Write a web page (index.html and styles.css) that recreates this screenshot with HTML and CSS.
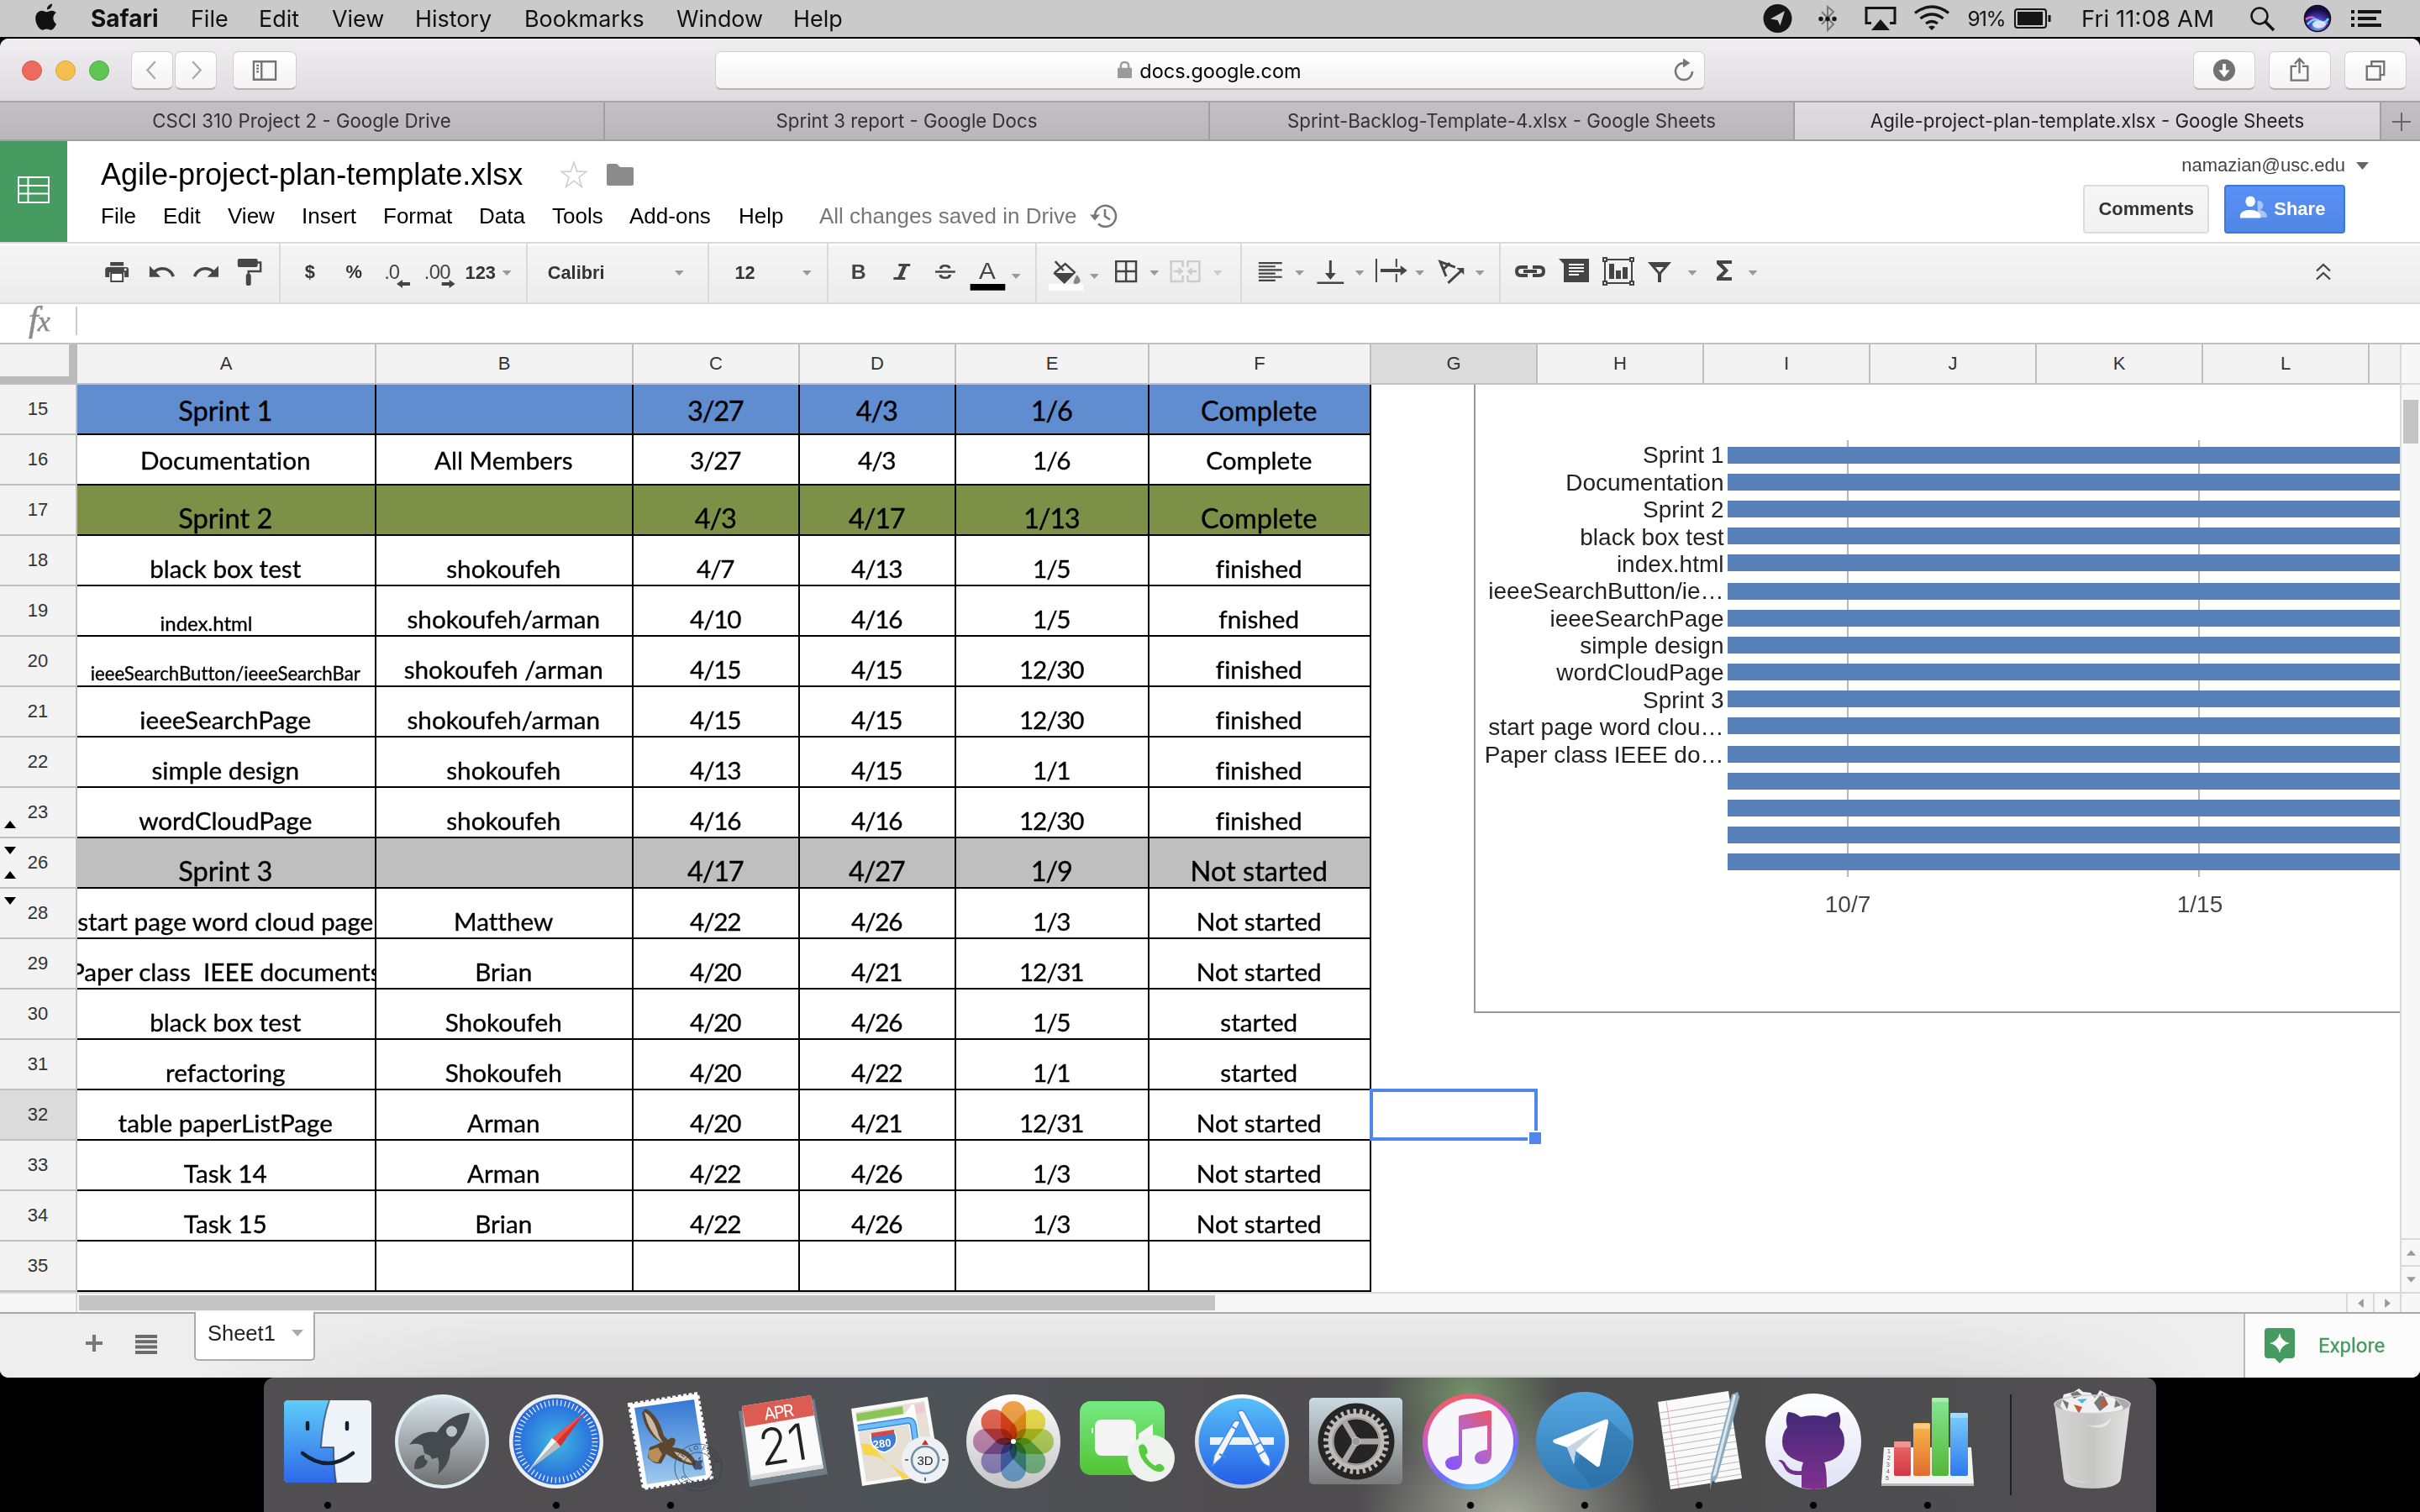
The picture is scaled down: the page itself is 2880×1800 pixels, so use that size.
FILE: index.html
```html
<!DOCTYPE html>
<html lang="en">
<head>
<meta charset="utf-8">
<title>Agile-project-plan-template.xlsx - Google Sheets</title>
<link rel="stylesheet" href="styles.css">
</head>
<body>
<div class="menubar">
  <svg class="apple" viewBox="36 0 40 44"><path fill="#111" d="M62 4.500c.3 3.200-2.600 7-6 7-.4-3.200 2.800-6.700 6-7zM67 28.500c-1.600 4-4 7.200-6.700 7.200-1.800 0-2.600-1.100-4.800-1.100s-3.100 1.100-4.800 1.100c-3.900 0-8.500-7.500-8.500-13.700 0-5.600 3.600-9.300 7.400-9.300 2.400 0 4.200 1.500 5.900 1.500 1.600 0 3.600-1.700 6.600-1.500 1.700.1 3.500.8 4.700 2.600-4.900 3.200-4.200 10.200.2 13.200z"/></svg>
  <b>Safari</b><span>File</span><span>Edit</span><span>View</span><span>History</span><span>Bookmarks</span><span>Window</span><span>Help</span>
  <svg class="status" viewBox="2090 0 790 44" fill="none" stroke="#151515" stroke-width="3">
    <circle cx="2115.500" cy="22" r="17" fill="#151515" stroke="none"/><path fill="#cacaca" stroke="none" d="M2124 13l-5.500 17.500-3-6.500-8.500-1.500z"/>
    <path stroke="#777" stroke-width="2" d="M2168 14l14 15-7 7V8l7 6-14 15"/><g fill="#151515" stroke="none"><circle cx="2167" cy="22.500" r="2.700"/><circle cx="2175" cy="22.500" r="2.700"/><circle cx="2183" cy="22.500" r="2.700"/></g>
    <path d="M2227 27.500h-6v-18h34v18h-6"/><path fill="#151515" stroke="none" d="M2238 23l11 13h-22z"/>
    <path stroke-width="3.200" d="M2279 15.500q20-15 40 0M2285.500 22q13.500-10 27 0M2292 28q7-5 14 0"/><path fill="#151515" stroke="none" d="M2299 36l-4-4q4-3 8 0z"/>
    <rect x="2398" y="11" width="37" height="22" rx="3" stroke-width="2"/><rect x="2401" y="14" width="30" height="16" fill="#151515" stroke="none"/><path d="M2439 18v8" stroke-width="3"/>
    <circle cx="2689" cy="19" r="9.500" stroke-width="2.500"/><path d="M2696 26l10 10" stroke-width="3.500"/>
    <circle cx="2758" cy="22" r="15.500" fill="url(#siri)" stroke-width="1.500" stroke="#111"/>
    <path stroke="#e45bd6" stroke-width="2.500" d="M2744 23q8-6 13 2t13 2"/><path stroke="#5fe0ff" stroke-width="2.500" d="M2746 29q8-9 14-4t11-3"/><ellipse cx="2760" cy="29" rx="8" ry="4.500" fill="#e8f5ff" opacity=".8" stroke="none"/>
    <path stroke-width="4" d="M2798 14h4M2806 14h28M2798 22h4M2806 22h22M2798 30h4M2806 30h28"/>
    <g fill="#151515" stroke="none" font-family="Inter, sans-serif"><text x="2341.500" y="30.500" font-size="24.500" textLength="46">91%</text><text x="2477" y="32" font-size="27.500" textLength="158">Fri 11:08 AM</text></g>
    <defs><radialGradient id="siri" cx=".5" cy=".8" r=".8"><stop offset="0" stop-color="#7fd0ff"/><stop offset=".35" stop-color="#5346c9"/><stop offset=".8" stop-color="#160b48"/></radialGradient></defs>
  </svg>
</div>

<div class="window">
  <div class="toolbar">
    <div class="lights"><i class="red"></i><i class="amber"></i><i class="green"></i></div>
    <div class="nav">
      <div class="btn"><svg viewBox="0 0 50 46"><path d="M29 12L19 23l10 11"/></svg></div><div class="btn"><svg viewBox="0 0 50 46"><path d="M21 12l10 11-10 11"/></svg></div>
    </div>
    <div class="btn sidebar"><svg viewBox="277 61 76 46"><path d="M301 73h28v23h-28zM311 73v23M304.500 78h3M304.500 82h3M304.500 86h3"/></svg></div>
    <div class="address">
      <svg class="lock" viewBox="0 0 18 22"><rect x="0" y="8" width="18" height="13" rx="1"/><path d="M4 9V6q0-5 5-5t5 5v3"/></svg><span>docs.google.com</span>
      <svg class="reload" viewBox="0 0 30 34"><path fill="none" stroke="#777" stroke-width="2.500" d="M15 8A10 10 0 1 0 25 18"/><path fill="#777" d="M14 2.500l8.500 5.500-8.500 5.500z"/></svg>
    </div>
    <div class="btn dl"><svg viewBox="0 0 74 46"><circle cx="37" cy="23" r="14" fill="#727272" stroke="none"/><path stroke="#fff" stroke-width="4" d="M37 15v10"/><path fill="#fff" stroke="none" d="M30 23h14l-7 9z"/></svg></div>
    <div class="btn wide"><svg viewBox="0 0 74 46"><path d="M33 18h-7v18h21V18h-7M36.500 27V9M30.500 15l6-6.500 6 6.500"/></svg></div>
    <div class="btn wide"><svg viewBox="0 0 74 46"><path d="M26 18h17v17H26zM32 18v-6h16v17h-5"/></svg></div>
  </div>
  <div class="tabs"><div>CSCI 310 Project 2 - Google Drive</div><div>Sprint 3 report - Google Docs</div><div>Sprint-Backlog-Template-4.xlsx - Google Sheets</div><div class="on">Agile-project-plan-template.xlsx - Google Sheets</div><div class="plus"><svg viewBox="0 0 46 44"><path d="M13 23h22M24 12v22"/></svg></div></div>

  <div class="dochead">
    <div class="logo"><svg viewBox="0 0 40 34" fill="none" stroke="#fff" stroke-width="2"><path d="M2 2h36v30H2zM2 12h36M2 21.500h36M13.500 2v30"/></svg></div>
    <div class="doc">
      <div class="title"><span>Agile-project-plan-template.xlsx</span>
        <svg class="star" viewBox="0 0 34 34"><path fill="none" stroke="#ccc" stroke-width="1.500" d="M17 2l3.700 11.200H32l-9 7 3.400 11.300-9.400-7-9.400 7L11 20.200l-9-7h11.300z"/></svg>
        <svg class="folder" viewBox="0 0 32 26"><path fill="#8b8b8b" d="M2 0h10l4 4h14q2 0 2 2v18q0 2-2 2H2q-2 0-2-2V2q0-2 2-2z"/></svg></div>
      <div class="menus"><span>File</span><span>Edit</span><span>View</span><span>Insert</span><span>Format</span><span>Data</span><span>Tools</span><span>Add-ons</span><span>Help</span><em>All changes saved in Drive</em>
        <svg class="hist" viewBox="0 0 34 30" fill="none" stroke="#777" stroke-width="2.500"><path d="M6 15A12.500 12.500 0 1 1 10 24.500M18 7v8.500l6 4"/><path fill="#777" stroke="none" d="M0 13.500h12l-6 7z"/></svg></div>
    </div>
    <div class="account">
      <div class="mail">namazian@usc.edu<svg viewBox="0 0 16 9"><path fill="#666" d="M0 0h15L7.500 9z"/></svg></div>
      <div class="actions"><div class="comments">Comments</div><div class="share"><svg viewBox="0 0 34 27"><path fill="#a9c5fb" d="M21 6a5 5 0 0 1 3 11q9 1 9 9H22z"/><ellipse cx="12.500" cy="6.500" rx="6" ry="6.500" fill="#fff"/><path fill="#fff" d="M0 27v-4q2-6 12-6t13 6v4z"/></svg>Share</div></div>
    </div>
  </div>

  <div class="tools">
    <svg style="width:334px" viewBox="0 292 334 68" fill="#474747"><path d="M132 312h16v4.500h-16zM129 318h22q3 0 3 3v9h-5v-6h-18v6h-5v-9q0-3 3-3z"/><path fill="#fff" stroke="#474747" stroke-width="2" d="M133 325h14v10h-14z"/><circle cx="150" cy="321" r="1.500" fill="#fff"/><path transform="translate(176 306) scale(1.480)" d="M12.500 8c-2.650 0-5.050.99-6.900 2.600L2 7v9h9l-3.620-3.620c1.390-1.160 3.160-1.880 5.120-1.880 3.540 0 6.550 2.310 7.600 5.500l2.370-.78C21.080 11.030 17.150 8 12.500 8z"/><path transform="translate(264.500 306) scale(-1.480 1.480)" d="M12.500 8c-2.650 0-5.050.99-6.900 2.600L2 7v9h9l-3.620-3.620c1.390-1.160 3.160-1.880 5.120-1.880 3.540 0 6.550 2.310 7.600 5.500l2.370-.78C21.080 11.030 17.150 8 12.500 8z"/><rect x="284.500" y="308" width="24" height="10" rx="2"/><path fill="none" stroke="#474747" stroke-width="2.500" d="M307.500 312.500h4.500v10.500h-14.500v4"/><rect x="294.500" y="326" width="6" height="14" rx="2"/></svg>
    <svg style="width:294px" viewBox="333 292 294 68" fill="#333"><g font-weight="bold" font-size="22"><text x="362" y="331">$</text><text x="411" y="331">%</text><text x="554" y="332">123</text></g><g font-size="24" fill="#444"><text x="457" y="332" textLength="19">.0</text><text x="505" y="332" textLength="32">.00</text></g><path fill="#444" d="M472 338l7-5v3h9v4h-9v3zM542 338l-7-5v3h-9v4h9v3z"/><path class="tri" d="M598.500 322h11l-5.500 6z"/></svg>
    <svg style="width:216px" viewBox="628 292 216 68" fill="#333"><text x="652" y="332" font-weight="bold" font-size="22">Calibri</text><path class="tri" d="M804.500 322h11l-5.500 6z"/></svg>
    <svg style="width:142px" viewBox="843 292 142 68" fill="#333"><text x="874" y="332" font-weight="bold" font-size="22">12</text><path class="tri" d="M955.500 322h11l-5.500 6z"/></svg>
    <svg style="width:248px" viewBox="985 292 248 68" fill="#444"><text x="1012" y="332" font-weight="bold" font-size="25">B</text><path fill="none" stroke="#444" stroke-width="3" d="M1069 315.500h14M1063 331.500h14"/><path stroke="#444" stroke-width="4.500" d="M1077 315l-7 17"/><text x="1116.500" y="332" font-weight="bold" font-size="25">S</text><path stroke="#efefef" stroke-width="7" d="M1113 323.500h24"/><path stroke="#444" stroke-width="2.500" d="M1113 323.500h24"/><text x="1165.500" y="332" font-size="28" textLength="20" lengthAdjust="spacingAndGlyphs">A</text><path fill="#000" d="M1155 338h42v8h-42z"/><path class="tri" d="M1204.500 326h11l-5.500 6z"/></svg>
    <svg style="width:244px" viewBox="1233 292 244 68" fill="#444"><path d="M1252 325h27l-13 13z"/><path fill="none" stroke="#444" stroke-width="2.500" d="M1254 325l13-11 12 11M1255 311l10 11"/><path fill="#888" d="M1281 327q8 9 0 11t0-11z"/><path fill="#fff" d="M1247 338h42v8h-42z"/><path class="tri" d="M1296.500 326h11l-5.500 6z"/><path fill="none" stroke="#444" stroke-width="2.500" d="M1328 311h24v24h-24zM1340 311v24M1328 323h24"/><path class="tri" d="M1368.500 322h11l-5.500 6z"/><g fill="none" stroke="#ccc" stroke-width="2.500"><path d="M1408 318v-7h-14v24h14v-7M1414 318v-7h14v24h-14v-7M1397 323h8M1425 323h-8"/></g><path fill="#ccc" d="M1403 318l6 5-6 5zM1419 318l-6 5 6 5zM1444.500 322h11l-5.500 6z"/></svg>
    <svg style="width:308px" viewBox="1477 292 308 68" fill="#444"><path stroke="#444" stroke-width="2.200" d="M1497 313h28M1497 317.200h20M1497 321.400h28M1497 325.600h20M1497 329.800h28M1497 334h20"/><path class="tri" d="M1540.500 322h11l-5.500 6z"/><path d="M1581.500 310h3v15h5l-6.500 8-6.500-8h5zM1567 335.500h32v2.500h-32z"/><path class="tri" d="M1612.500 322h11l-5.500 6z"/><path d="M1637 308h2v28h-2zM1661 308h2v10h-2zM1661 326h2v10h-2zM1643 320h24v-4l8 6-8 6v-4h-24z"/><path class="tri" d="M1684.500 322h11l-5.500 6z"/><path fill="none" stroke="#444" stroke-width="3" d="M1721.500 329l-7-17.500 18 6.500M1718 321l8-8M1724 337l16-15"/><path d="M1734 319h9v8z"/><path class="tri" d="M1756.500 322h11l-5.500 6z"/></svg>
    <svg class="last" style="width:400px" viewBox="1786 292 400 68" fill="#444"><path fill="none" stroke="#444" stroke-width="4" d="M1818 318h-8q-5 0-5 5t5 5h8M1824 318h8q5 0 5 5t-5 5h-8M1813 323h16"/><path d="M1855 308h36v28h-30v-22z"/><path stroke="#fff" stroke-width="2" d="M1867 315h18M1867 319h18M1867 323h18M1867 327h12"/><path fill="none" stroke="#444" stroke-width="2" d="M1910 309h32v28h-32z"/><path fill="#fff" stroke="#444" stroke-width="2" d="M1908 307h4v4h-4zM1940 307h4v4h-4zM1908 335h4v4h-4zM1940 335h4v4h-4z"/><path d="M1915 314h6v18h-6zM1923 322h6v10h-6zM1931 318h6v14h-6z"/><path fill-rule="evenodd" d="M1961 312h28l-12 14v10h-4v-10zM1970 318h10l-5 6z"/><path class="tri" d="M2008.500 322h11l-5.500 6z"/><path d="M2043 310h18v4h-11.500l7.500 8-7.500 8H2061v4h-18v-4l8.500-8-8.500-8z"/><path class="tri" d="M2080.500 322h11l-5.500 6z"/></svg>
    <svg class="collapse" viewBox="0 0 24 24" fill="none" stroke="#444" stroke-width="2.300"><path d="M4 10.500l8-7.500 8 7.500M4 20.500l8-7.500 8 7.500"/></svg>
  </div>
  <div class="formula"><span>f<small>x</small></span><i></i></div>

  <div class="sheet">
    <div class="grid">
      <div class="cols"><b class="corner"></b><b>A</b><b>B</b><b>C</b><b>D</b><b>E</b><b>F</b><b class="sel">G</b><b>H</b><b>I</b><b>J</b><b>K</b><b>L</b><b></b></div>
      <div class="row head blue mid"><i>15</i><p>Sprint 1</p><p></p><p>3/27</p><p>4/3</p><p>1/6</p><p>Complete</p></div>
      <div class="row mid"><i>16</i><p>Documentation</p><p>All Members</p><p>3/27</p><p>4/3</p><p>1/6</p><p>Complete</p></div>
      <div class="row head olive"><i>17</i><p>Sprint 2</p><p></p><p>4/3</p><p>4/17</p><p>1/13</p><p>Complete</p></div>
      <div class="row"><i>18</i><p>black box test</p><p>shokoufeh</p><p>4/7</p><p>4/13</p><p>1/5</p><p>finished</p></div>
      <div class="row"><i>19</i><p class="small idx">index.html</p><p>shokoufeh/arman</p><p>4/10</p><p>4/16</p><p>1/5</p><p>fnished</p></div>
      <div class="row"><i>20</i><p class="small">ieeeSearchButton/ieeeSearchBar</p><p>shokoufeh /arman</p><p>4/15</p><p>4/15</p><p>12/30</p><p>finished</p></div>
      <div class="row"><i>21</i><p>ieeeSearchPage</p><p>shokoufeh/arman</p><p>4/15</p><p>4/15</p><p>12/30</p><p>finished</p></div>
      <div class="row"><i>22</i><p>simple design</p><p>shokoufeh</p><p>4/13</p><p>4/15</p><p>1/1</p><p>finished</p></div>
      <div class="row up"><i>23</i><p>wordCloudPage</p><p>shokoufeh</p><p>4/16</p><p>4/16</p><p>12/30</p><p>finished</p></div>
      <div class="row head gray up down"><i>26</i><p>Sprint 3</p><p></p><p>4/17</p><p>4/27</p><p>1/9</p><p>Not started</p></div>
      <div class="row down"><i>28</i><p>start page word cloud page</p><p>Matthew</p><p>4/22</p><p>4/26</p><p>1/3</p><p>Not started</p></div>
      <div class="row"><i>29</i><p>Paper class  IEEE documents</p><p>Brian</p><p>4/20</p><p>4/21</p><p>12/31</p><p>Not started</p></div>
      <div class="row"><i>30</i><p>black box test</p><p>Shokoufeh</p><p>4/20</p><p>4/26</p><p>1/5</p><p>started</p></div>
      <div class="row"><i>31</i><p>refactoring</p><p>Shokoufeh</p><p>4/20</p><p>4/22</p><p>1/1</p><p>started</p></div>
      <div class="row current"><i>32</i><p>table paperListPage</p><p>Arman</p><p>4/20</p><p>4/21</p><p>12/31</p><p>Not started</p><span class="cursor"></span></div>
      <div class="row"><i>33</i><p>Task 14</p><p>Arman</p><p>4/22</p><p>4/26</p><p>1/3</p><p>Not started</p></div>
      <div class="row"><i>34</i><p>Task 15</p><p>Brian</p><p>4/22</p><p>4/26</p><p>1/3</p><p>Not started</p></div>
      <div class="row"><i>35</i><p></p><p></p><p></p><p></p><p></p><p></p></div>
      <svg class="chart" viewBox="1754 458 1102 748">
        <path fill="#fff" stroke="#999" stroke-width="2" d="M1755 456v749h1110v-749z"/>
        <path stroke="#b7b7b7" stroke-width="2" d="M2199 524v520M2617 524v520"/>
        <path stroke="#5880b8" stroke-width="20" d="M2056 542h800M2056 574h800M2056 606h800M2056 638h800M2056 670h800M2056 704h800M2056 736h800M2056 768h800M2056 800h800M2056 832h800M2056 864h800M2056 898h800M2056 930h800M2056 962h800M2056 994h800M2056 1026h800"/>
        <g font-size="28" fill="#222" text-anchor="end"><text x="2051.500" y="551">Sprint 1</text><text x="2051.500" y="584">Documentation</text><text x="2051.500" y="616">Sprint 2</text><text x="2051.500" y="649">black box test</text><text x="2051.500" y="681">index.html</text><text x="2051.500" y="713">ieeeSearchButton/ie…</text><text x="2051.500" y="746">ieeeSearchPage</text><text x="2051.500" y="778">simple design</text><text x="2051.500" y="810">wordCloudPage</text><text x="2051.500" y="843">Sprint 3</text><text x="2051.500" y="875">start page word clou…</text><text x="2051.500" y="908">Paper class IEEE do…</text></g>
        <g font-size="28" fill="#444" text-anchor="middle"><text x="2199" y="1086">10/7</text><text x="2618" y="1086">1/15</text></g>
      </svg>
    </div>
    <div class="vbar"><div class="vtop"></div><div class="thumb"></div><div class="arrow first"><svg viewBox="0 0 10 6"><path d="M0 6h10L5 0z"/></svg></div><div class="arrow"><svg viewBox="0 0 10 6"><path d="M0 0h10L5 6z"/></svg></div></div>
  </div>
  <div class="hbar"><div class="left"></div><div class="thumb"></div><div class="arrow"><svg viewBox="0 0 6 10"><path d="M6 0v10L0 5z"/></svg></div><div class="arrow"><svg viewBox="0 0 6 10"><path d="M0 0v10l6-5z"/></svg></div><div class="end"></div></div>
  <div class="footer">
    <svg class="ficons" viewBox="92 1564 130 76"><path stroke="#777" stroke-width="4" d="M102 1599h20M112 1589v20"/><path stroke="#6b6b6b" stroke-width="4" d="M161 1591h26M161 1597.300h26M161 1603.600h26M161 1610h26"/></svg>
    <div class="tab">Sheet1<svg viewBox="0 0 14 8"><path fill="#aaa" d="M0 0h14L7 8z"/></svg></div>
    <div class="explore"><svg viewBox="0 0 36 42"><path fill="#459b60" d="M4 0h28q4 0 4 4v28q0 4-4 4h-8l-6 6-6-6H4q-4 0-4-4V4q0-4 4-4z"/><path fill="#fff" d="M18 6q2 10 12 12-10 2-12 12-2-10-12-12 10-2 12-12z"/></svg>Explore</div>
  </div>
</div>

<div class="dock">
  <svg class="run" viewBox="0 0 136 160"><defs><linearGradient id="fb" x2="0" y2="1"><stop stop-color="#5fcdf9"/><stop offset="1" stop-color="#2e68e8"/></linearGradient><linearGradient id="lp" x2="0" y2="1"><stop stop-color="#d7e4ea"/><stop offset="1" stop-color="#6f6f6f"/></linearGradient><linearGradient id="silver" x2="0" y2="1"><stop stop-color="#fff"/><stop offset="1" stop-color="#c4c4c6"/></linearGradient></defs><rect x="16" y="27" width="104" height="98" rx="5" fill="#eef2f9"/><path fill="url(#fb)" d="M21 27h49q-8 22-10 56h15q0 22 3 42H21q-5 0-5-5V32q0-5 5-5z"/><path fill="none" stroke="#1a2638" stroke-width="2" opacity=".6" d="M70 27q-8 22-10 56h15q0 22 3 42"/><path fill="none" stroke="#14202f" stroke-width="4.500" stroke-linecap="round" d="M44 54v7M91 54v7M38 90q30 24 60 0"/></svg>
  <svg viewBox="0 0 136 160"><circle cx="68" cy="76" r="56" fill="#dfeef4"/><circle cx="68" cy="76" r="52" fill="url(#lp)"/><path fill="#444a4e" d="M101 42q-24 1-39 23-20-3-33 15 9-3 16 1l2 9 7 3 2 4 7-2q3 9 0 20 15-12 15-30 19-17 23-43zM35 109q0-16 12-17-1 6 4 7-2 10-16 10z"/><circle cx="79.500" cy="64" r="6.500" fill="#b9c5ca"/></svg>
  <svg class="run" viewBox="0 0 136 160"><defs><radialGradient id="sf"><stop stop-color="#41b8e0"/><stop offset="1" stop-color="#2566dd"/></radialGradient></defs><circle cx="68" cy="76" r="56" fill="#eee"/><circle cx="68" cy="76" r="51.500" fill="url(#sf)"/><circle cx="68" cy="76" r="46" fill="none" stroke="#e5eefb" stroke-width="7" stroke-dasharray="1.300 3.517"/><path fill="#d92f2b" d="M102 41L73 82 68 76z"/><path fill="#f0514d" d="M102 41L63 72l5 5z"/><path fill="#f3f3f3" d="M35.500 110L63 72l5 4z"/><path fill="#bcbcbc" d="M35.500 110L73 82l-5-6z"/></svg>
  <svg class="run" viewBox="0 0 136 160"><defs><linearGradient id="sky" x2="0" y2="1"><stop stop-color="#3478d4"/><stop offset="1" stop-color="#9fcbee"/></linearGradient><path id="arc1" d="M80 107a21 21 0 0 1 42 0"/><path id="arc2" d="M77 107a25 25 0 0 0 50 0"/></defs><path fill="#fff" stroke="#fff" stroke-width="4" stroke-dasharray="4 2.500" d="M19 32l81-13 17 100-81 13z"/><path fill="#fff" d="M20 33l79-13 17 98-79 13z"/><path fill="url(#sky)" d="M25 36l71-10 14 90-70 11z"/><path fill="#5d4630" d="M34 42l4-5q15 6 22 32l5 5q6-5 9 0l-1 5-3 4q20 1 28 17l-1 5-10-2-16-7-8-5-6 11q-9 2-16-7l2-12 8-3 6-3q-19-10-23-35z"/><path fill="#c9bba3" d="M37 41q11 6 17 28l5 9q-17-12-22-37zM72 88q14 2 22 14-14-2-22-14z"/><path fill="#b88d58" d="M42 87l11-4 5 8-5 10q-7 0-11-6z"/><g fill="none" stroke="#343c50" opacity=".75"><circle cx="101" cy="107" r="28"/><circle cx="101" cy="107" r="18"/></g><g font-size="7" fill="#343c50" letter-spacing="1"><text><textPath href="#arc1" startOffset="6">HELLO FROM</textPath></text><text><textPath href="#arc2" startOffset="12">CALIFORNIA</textPath></text></g><path transform="translate(73 92) scale(.5)" fill="#343c50" opacity=".8" d="M62 4.500c.3 3.200-2.600 7-6 7-.4-3.200 2.800-6.700 6-7zM67 28.500c-1.600 4-4 7.200-6.700 7.200-1.800 0-2.600-1.100-4.800-1.100s-3.100 1.100-4.800 1.100c-3.900 0-8.500-7.500-8.500-13.700 0-5.600 3.600-9.300 7.400-9.300 2.400 0 4.200 1.500 5.900 1.500 1.600 0 3.600-1.700 6.600-1.500 1.700.1 3.500.8 4.700 2.600-4.900 3.200-4.200 10.200.2 13.200z"/></svg>
  <svg viewBox="0 0 136 160"><path fill="#6f7d87" d="M13 40l90-15 16 90-93 15z"/><path fill="#fafafa" d="M17 34l82-13 15 87-86 14z"/><path fill="#dadada" d="M27 117l86-14 1 5-86 14z"/><path fill="#dc5b52" d="M17 34l82-13 4 24-82 14z"/><g text-anchor="middle" font-family="Inter, sans-serif"><text transform="translate(62 48) rotate(-9)" font-size="20" fill="#fff" textLength="36">APR</text><text transform="translate(69 101) rotate(-9)" font-size="60" font-weight="300" fill="#222" textLength="57" lengthAdjust="spacingAndGlyphs">21</text></g></svg>
  <svg viewBox="0 0 136 160"><path fill="#fafafa" d="M11 37l91-14 15 92-93 14z"/><path fill="#e5e0d3" d="M16 41l82-13 14 83-83 13z"/><path fill="#8cc557" d="M17 43l55-9 1 9-55 9z"/><path fill="#f0c9d2" d="M83 33l14-2 2 10-14 2z"/><path fill="#fff" d="M18 53l56-9 9-12h3l14 84h-9L79 56l-60 9z"/><path fill="none" stroke="#3b88e0" stroke-width="8" d="M19 60l60-9q5 0 6 6l7 50"/><path fill="none" stroke="#6ebcf8" stroke-width="5" d="M19 60l60-9q5 0 6 6l7 50"/><path fill="#f9d54c" d="M23 79q12-2 20 10t39 30l-10 2Q52 90 26 92z"/><path fill="#3e7dd6" stroke="#fff" stroke-width="1.500" d="M34 69l29-4q7 16-12 24-17-3-17-20z"/><path fill="#d84646" d="M35 66l27-4v5l-27 4z"/><text x="37" y="83" font-size="13" font-weight="bold" fill="#fff" transform="rotate(-6 48 80)">280</text><circle cx="99" cy="98" r="28" fill="#eef0f4"/><circle cx="99" cy="98" r="16" fill="none" stroke="#6e8ea6" stroke-width="2.500"/><path fill="#d42a20" d="M99 74l4 6h-8z"/><path stroke="#444" stroke-width="1.500" d="M99 119v4M75 98h4M119 98h4"/><text x="99" y="103.500" font-size="15" text-anchor="middle" fill="#222">3D</text></svg>
  <svg viewBox="0 0 136 160"><circle cx="68" cy="76" r="56" fill="url(#silver)"/><g class="petals"><rect x="53" y="28" width="30" height="48" rx="15" fill="#f3a041"/><rect x="53" y="28" width="30" height="48" rx="15" fill="#f0e045" transform="rotate(45 68 76)"/><rect x="53" y="28" width="30" height="48" rx="15" fill="#b9d958" transform="rotate(90 68 76)"/><rect x="53" y="28" width="30" height="48" rx="15" fill="#7cc688" transform="rotate(135 68 76)"/><rect x="53" y="28" width="30" height="48" rx="15" fill="#74b2e4" transform="rotate(180 68 76)"/><rect x="53" y="28" width="30" height="48" rx="15" fill="#9a8dcb" transform="rotate(225 68 76)"/><rect x="53" y="28" width="30" height="48" rx="15" fill="#c988b5" transform="rotate(270 68 76)"/><rect x="53" y="28" width="30" height="48" rx="15" fill="#e9604c" transform="rotate(315 68 76)"/></g><circle cx="68" cy="76" r="3" fill="#fff"/></svg>
  <svg viewBox="0 0 136 160"><defs><linearGradient id="ft" x2="0" y2="1"><stop stop-color="#75ea83"/><stop offset="1" stop-color="#53c334"/></linearGradient></defs><rect x="11" y="28" width="101" height="88" rx="13" fill="url(#ft)"/><rect x="29" y="50" width="49" height="43" rx="8" fill="#f5f5f5"/><path fill="#f5f5f5" d="M81 67l17-12v36l-17-12zM25 60h2v6h-2z"/><circle cx="96" cy="96" r="28" fill="#eef1ec"/><path fill="#57cb3e" d="M81 82q5-6 9 1t-1 9q4 9 12 13 4-4 8-1t2 6q-6 6-18-4T81 82z"/></svg>
  <svg viewBox="0 0 136 160"><defs><linearGradient id="as" x2="0" y2="1"><stop stop-color="#57c1f8"/><stop offset="1" stop-color="#245ee6"/></linearGradient></defs><circle cx="68" cy="76" r="56" fill="url(#silver)"/><circle cx="68" cy="76" r="51.500" fill="url(#as)"/><path fill="#f1f1f3" d="M30 71h76v9H30z"/><path fill="#f5f5f7" stroke="#3f8bf0" stroke-width="1.500" d="M58 53q4-4 8 0L43 96l-10 9 2-13zM63 41q4-4 8 0l28 52q4 6 2 13-9-3-11-9z"/><path stroke="#3f8bf0" stroke-width="2" d="M54 57l8 5M41 91l8 4M82 82l8-5M87 92l10-6"/></svg>
  <svg viewBox="0 0 136 160"><defs><linearGradient id="sp" x2="0" y2="1"><stop stop-color="#cbdbe2"/><stop offset="1" stop-color="#7a7a7a"/></linearGradient></defs><rect x="12" y="24" width="111" height="103" rx="5" fill="url(#sp)"/><circle cx="68" cy="76" r="45.500" fill="#252525"/><circle cx="68" cy="76" r="36" fill="none" stroke="#bdbbb9" stroke-width="6" stroke-dasharray="3.500 4.040"/><circle cx="68" cy="76" r="30" fill="none" stroke="#bdbbb9" stroke-width="7"/><circle cx="68" cy="76" r="28" fill="none" stroke="#8a8885" stroke-width="1"/><path stroke="#aaa8a5" stroke-width="7" d="M68 76h28M68 76L53 51M68 76l-15 25"/><circle cx="68" cy="76" r="5" fill="#999" stroke="#ccc"/></svg>
  <svg class="run" viewBox="0 0 136 160"><defs><linearGradient id="it" x1=".2" y1="0" x2=".6" y2="1"><stop stop-color="#fa5c52"/><stop offset=".45" stop-color="#c35dd6"/><stop offset=".75" stop-color="#6c6cf5"/><stop offset="1" stop-color="#4fc5fb"/></linearGradient><linearGradient id="nt" x1="1" y1="0" x2=".2" y2="1"><stop stop-color="#ef5560"/><stop offset=".5" stop-color="#b565c4"/><stop offset="1" stop-color="#8a55f8"/></linearGradient></defs><circle cx="68" cy="76" r="57" fill="url(#it)"/><circle cx="68" cy="76" r="51" fill="#f6f6fb"/><path fill="url(#nt)" d="M54 47q0-2 2-2l34-6q3 0 3 2v52q-1 10-11 10-9 0-9-8 1-8 15-9V57l-30 5v39q-1 9-11 9-9-1-9-9 1-7 16-8z"/></svg>
  <svg class="run" viewBox="0 0 136 160"><defs><linearGradient id="tg" x2="0" y2="1"><stop stop-color="#54a7e2"/><stop offset="1" stop-color="#3079b3"/></linearGradient></defs><circle cx="68" cy="75" r="58" fill="url(#tg)"/><path fill="#256498" opacity=".4" d="M96 50l29 26q-6 46-49 55L55 103z"/><path fill="#fff" d="M31 74l61-24q5-1 4 4L86 104q-1 4-5 1L57 87l-2 16-8-20-15-5q-3-2-1-4z"/><path fill="#c2d6e6" d="M47 83l39-24-29 28-2 16z"/></svg>
  <svg class="run" viewBox="0 0 136 160"><path fill="#fafafa" d="M19 29l84-13 16 104-85 13z"/><path stroke="#b5b5b5" d="M21 42l84-14M22 50l84-14M23 58l84-14M25 66l84-14M26 74l84-14M27 82l84-14M28 90l84-14M30 98l84-14M31 106l84-14M32 114l84-14M33 122l84-14M34 129l84-14"/><path stroke="#eaa" d="M29 28l15 103"/><path fill="#8caabd" d="M107 20l7-3 2 6-26 95-9 15 1-16z"/><path fill="#d9e6ee" d="M109 20l3 1-24 95-4 2z"/><path fill="#444" d="M84 123l3 1-6 9z"/></svg>
  <svg class="run" viewBox="0 0 136 160"><defs><linearGradient id="gc" x2="0" y2="1"><stop stop-color="#432a78"/><stop offset="1" stop-color="#80308f"/></linearGradient><linearGradient id="gw" x2="0" y2="1"><stop stop-color="#fff"/><stop offset="1" stop-color="#dfe2f6"/></linearGradient></defs><circle cx="68" cy="76" r="57" fill="url(#gw)"/><path fill="url(#gc)" d="M38 41q8 0 15 6 15-4 30 0 7-6 15-6 4 8 1 18 6 7 6 17 0 20-24 25 3 6 3 30-15 4-30 0v-15q-17 1-21-10-3-6-7-7 4-3 8 2 5 12 20 10 0-6 2-10-25-6-25-25 0-10 6-17-3-10 1-18z"/></svg>
  <svg class="run" viewBox="0 0 136 160"><defs><linearGradient id="n1" x2="0" y2="1"><stop stop-color="#ec6a68"/><stop offset="1" stop-color="#d23743"/></linearGradient><linearGradient id="n2" x2="0" y2="1"><stop stop-color="#f8b84a"/><stop offset="1" stop-color="#e06c2f"/></linearGradient><linearGradient id="n3" x2="0" y2="1"><stop stop-color="#85e890"/><stop offset="1" stop-color="#55b53a"/></linearGradient><linearGradient id="n4" x2="0" y2="1"><stop stop-color="#7cd0fa"/><stop offset="1" stop-color="#2c78ee"/></linearGradient></defs><path fill="#f4f4f4" d="M16 83h104l3 43H13z"/><path fill="#bbb" d="M13 126h110v3H13z"/><g font-size="7" fill="#555"><text x="20" y="90">1</text><text x="20" y="98">2</text><text x="19" y="106">3</text><text x="19" y="114">4</text><text x="18" y="122">5</text></g><rect x="28" y="76" width="20" height="41" rx="2" fill="url(#n1)"/><rect x="51" y="54" width="20" height="63" rx="2" fill="url(#n2)"/><rect x="73" y="24" width="20" height="93" rx="2" fill="url(#n3)"/><rect x="95" y="42" width="21" height="75" rx="2" fill="url(#n4)"/><path fill="#fff" opacity=".3" d="M28 76h20v7H28zM51 55h20v6H51zM73 24h20v5H73zM95 42h21v6H95z"/></svg>
  <i class="sep"></i>
  <svg viewBox="0 0 136 160"><defs><linearGradient id="tr"><stop stop-color="#d5d5d5"/><stop offset=".5" stop-color="#c6c6c5"/><stop offset="1" stop-color="#e2e2e2"/></linearGradient></defs><ellipse cx="68" cy="32" rx="45" ry="11" fill="#aaa"/><path fill="#f0f0f0" d="M30 34l4-14 12-3 6-4 5 4 9 1 5 7 6-10 10 5 11 7 7 9-8 8-60-1z"/><path fill="#777" d="M42 19l8-3 6 5-10 4zM70 30l10-12 7 14-10 8zM32 26l8 4-2 8zM96 26l6 7-8 3z"/><path fill="#52b8e0" d="M50 26l12-1-6 6z"/><path fill="#c05a3a" d="M78 29l5-4 3 7-7 4zM46 32l10 3-4 8z"/><path fill="url(#tr)" d="M23 32q3 10 45 10t45-10l-11 88q-2 12-34 12t-34-12z"/><ellipse cx="68" cy="32" rx="45" ry="11" fill="none" stroke="#d0d0d0" stroke-width="1.500"/><path fill="#fff" opacity=".5" d="M30 50l8 66q4 8 30 9-20 1-30-7zM60 56q20 4 30-8-4 18-30 8z"/></svg>
</div>
</body>
</html>
```
FILE: styles.css
```css
* { box-sizing: border-box; }
body { margin: 0; width: 2880px; height: 1800px; overflow: hidden; background: #000; font-family: "Liberation Sans", Arial, sans-serif; color: #000; display: flex; flex-direction: column; }
svg { display: block; flex: none; }
p { margin: 0; }
i, em { font-style: normal; }

.menubar { height: 44px; flex: none; background: #cacaca; display: grid; grid-template-columns: 36px 72px 119px 81px 87px 99px 130px 181px 139px 1146px 790px; align-items: center; font: 26.900px/44px Inter, sans-serif; color: #111; }
.menubar b { grid-column: 3; font-size: 28px; }
.apple { grid-column: 2; width: 40px; height: 44px; }
.status { width: 790px; height: 44px; }

.window { margin-top: 2px; height: 1594px; flex: none; border-radius: 10px; overflow: hidden; background: #fff; display: flex; flex-direction: column; }
.toolbar { height: 76px; flex: none; display: flex; align-items: flex-start; padding: 15px 16px 0 26px; background: linear-gradient(#f0eef1, #dedce0); border-bottom: 2px solid #a6a4a7; }
.lights { display: flex; gap: 16px; padding-top: 11px; width: 130px; }
.lights i { width: 24px; height: 24px; border-radius: 50%; border: 1px solid #d9574c; background: #ee6a5f; }
.lights .amber { background: #f5bf4f; border-color: #d9a33b; }
.lights .green { background: #61c554; border-color: #4ca73f; }
.btn { width: 50px; height: 46px; border-radius: 7px; background: linear-gradient(#fff, #f3f3f3); border: 1px solid #d0ced1; border-bottom: 2px solid #b5b3b6; }
.btn svg { width: 100%; height: 43px; fill: none; stroke: #727272; stroke-width: 2.500; }
.nav { display: flex; gap: 2px; }
.nav svg { stroke: #aaa; }
.sidebar { width: 76px; margin-left: 19px; }
.address { width: 1178px; height: 46px; margin-left: 498px; border-radius: 7px; background: linear-gradient(#fff, #f2f2f2); border: 1px solid #d0ced1; border-bottom: 2px solid #b5b3b6; display: flex; align-items: center; justify-content: center; padding-left: 38px; font: 23.500px/44px Inter, sans-serif; }
.address span { padding-top: 2px; }
.lock { width: 17px; height: 21px; margin-right: 9px; margin-left: auto; fill: #9a9a9a; }
.lock path { fill: none; stroke: #9a9a9a; stroke-width: 2.500; }
.reload { width: 30px; height: 34px; margin-left: auto; margin-right: 9px; }
.dl { width: 74px; margin-left: auto; }
.wide { width: 74px; margin-left: 16px; }
.tabs { height: 46px; flex: none; display: grid; grid-template-columns: 720px 720px 696px 698px 46px; background: linear-gradient(#c2c0c3, #b9b7ba); border-bottom: 2px solid #a09ea1; font: 22.250px/44px Inter, sans-serif; color: #333; text-align: center; }
.tabs div { border-right: 2px solid #a09ea1; }
.tabs .on { background: linear-gradient(#dddbde, #d6d4d7); color: #222; }
.tabs .plus { border: 0; }
.plus svg { width: 46px; height: 44px; stroke: #666; stroke-width: 2; }

.dochead { height: 120px; flex: none; display: flex; }
.logo { width: 80px; background: #459b60; display: flex; align-items: center; justify-content: center; padding-bottom: 4px; }
.logo svg { width: 40px; height: 34px; }
.doc { padding-left: 40px; }
.title { height: 75px; display: flex; align-items: center; font-size: 36px; line-height: 76px; padding-top: 5px; }
.star { width: 34px; height: 34px; margin: 0 22px 0 44px; }
.folder { width: 32px; height: 26px; }
.menus { display: grid; grid-template-columns: 74px 77px 88px 97px 114px 87px 92px 130px 96px 322px 34px; font-size: 26px; line-height: 28px; }
.menus em { color: #777; }
.hist { width: 34px; height: 30px; margin-top: -1px; }
.account { margin-left: auto; padding: 17px 60px 0 0; }
.mail { display: flex; align-items: center; font-size: 22px; line-height: 24px; color: #444; padding-left: 117px; }
.mail svg { width: 16px; height: 9px; margin-left: 13px; }
.actions { display: flex; gap: 18px; padding: 11px 0 0 0; font-weight: bold; font-size: 22px; line-height: 54px; }
.comments { width: 150px; height: 58px; border: 2px solid #dcdcdc; border-radius: 4px; background: linear-gradient(#f6f6f6, #f1f1f1); color: #333; text-align: center; }
.share { width: 144px; height: 58px; border: 2px solid #3f77e0; border-radius: 4px; background: linear-gradient(#5990f5, #5087e5); color: #fff; display: flex; align-items: center; padding-left: 17px; }
.share svg { width: 33px; height: 27px; margin-right: 7px; margin-bottom: 6px; }

.tools { height: 74px; flex: none; border-top: 2px solid #d9d9d9; border-bottom: 2px solid #d9d9d9; background: linear-gradient(#fff 2px, #f5f5f5 3px, #ececec); display: flex; }
.tools > svg { height: 70px; padding-top: 2px; border-right: 2px solid #dadada; overflow: visible; }
.tools > .last { border: 0; }
.tools > .collapse { width: 24px; height: 24px; border: 0; padding: 0; margin: 22px 0 0 567px; }
.tri { fill: #999; }
.formula { height: 46px; flex: none; display: flex; align-items: center; padding-left: 34px; }
.formula span { width: 56px; font: italic 42px/40px "Liberation Serif", serif; color: #8c8c8c; margin-top: -8px; -webkit-text-stroke: .6px #8c8c8c; }
.formula small { font-size: 34px; margin-left: -1px; }
.formula i { width: 2px; height: 34px; background: #ccc; margin-top: -6px; }

.sheet { height: 1132px; flex: none; display: flex; border-top: 2px solid #c0c0c0; border-bottom: 2px solid #d9d9d9; }
.grid { width: 2856px; height: 1128px; position: relative; overflow: hidden; }
.cols { height: 48px; display: grid; grid-template-columns: 92px 356px 306px 198px 186px 230px 264px repeat(6, 198px) 36px; background: #f3f3f3; border-bottom: 2px solid #c0c0c0; font-size: 22px; line-height: 46px; color: #333; text-align: center; }
.cols b { font-weight: normal; border-right: 2px solid #c0c0c0; }
.cols b:last-child { border: 0; }
.cols .sel { background: #dcdcdc; }
.cols .corner { border-right: 10px solid #bbb; border-bottom: 8px solid #bbb; }
.row { height: 60px; width: 1632px; display: grid; grid-template-columns: 92px 356px 306px 198px 186px 230px 264px; position: relative; }
.row i { background: #f3f3f3; border-right: 2px solid #c0c0c0; border-bottom: 2px solid #c0c0c0; font-size: 22px; line-height: 58px; text-align: center; color: #333; }
.row p { border-right: 2px solid #000; border-bottom: 2px solid #000; display: flex; align-items: flex-end; justify-content: center; overflow: hidden; white-space: pre; font-family: Lato, "Liberation Sans", sans-serif; font-size: 29.700px; line-height: 38px; padding-right: 1.500px; font-variant-ligatures: none; -webkit-text-stroke: .35px #000; }
.row p:nth-child(n+4):nth-child(-n+6) { letter-spacing: -1.200px; }
.head p { font-size: 32.600px; }
.row.mid p { padding-bottom: 9px; }
.head.mid p { padding-bottom: 8px; }
.row .small { font-size: 22.200px; line-height: 28px; }
.row .idx { font-size: 24px; padding-right: 47px; }
.blue p { background: #608dd0; }
.olive p { background: #7c9147; }
.gray p { background: #bfbfbf; }
.current i { background: #dcdcdc; }
.up::after, .down::before { content: ""; position: absolute; left: 5px; border: 7.500px solid transparent; }
.up::after { bottom: 12px; border-bottom: 9px solid #000; border-top: 0; }
.down::before { top: 10px; border-top: 9px solid #000; border-bottom: 0; }
.cursor { position: absolute; left: 1630px; top: -2px; width: 200px; height: 62px; border: 4px solid #4e86ec; z-index: 2; }
.cursor::after { content: ""; position: absolute; right: -9px; bottom: -10px; width: 14px; height: 14px; background: #4e86ec; border: 2px solid #fff; border-right-width: 1px; }
.chart { position: absolute; left: 1754px; top: 48px; width: 1102px; height: 748px; }
.vbar { width: 24px; height: 1128px; background: #f7f7f7; border-left: 2px solid #d9d9d9; display: flex; flex-direction: column; }
.vtop { height: 48px; border-bottom: 2px solid #d9d9d9; }
.vbar .thumb { width: 18px; height: 52px; margin: 18px 2px 0; background: #c4c4c4; }
.vbar .arrow { height: 32px; border-top: 2px solid #d9d9d9; display: flex; align-items: center; justify-content: center; }
.vbar .first { margin-top: auto; }
.vbar .arrow svg { width: 11px; height: 7px; }
.arrow { fill: #999; }
.hbar { height: 22px; flex: none; background: #f7f7f7; display: flex; }
.left { width: 92px; border-right: 2px solid #d9d9d9; }
.hbar .thumb { width: 1352px; height: 18px; margin: 2px auto 0 2px; background: #c4c4c4; }
.hbar .arrow { width: 32px; border-left: 2px solid #d9d9d9; display: flex; align-items: center; justify-content: center; }
.hbar .arrow svg { width: 7px; height: 11px; }
.end { width: 24px; border-left: 2px solid #d9d9d9; }
.footer { height: 78px; flex: none; border-top: 2px solid #a8a8a8; display: flex; background: linear-gradient(90deg, #eeeeee 220px, #eeeeee00 600px, #eeeeee00 2300px, #eeeeee 2640px), linear-gradient(#ebebeb, #dedede 95%, #c8c8c8); }
.ficons { width: 130px; height: 76px; margin-left: 92px; }
.tab { width: 144px; height: 58px; margin: -2px 0 0 9px; background: #fff; border: 2px solid #aaa; border-top: 0; border-radius: 0 0 5px 5px; display: flex; align-items: center; font-size: 25.500px; line-height: 50px; color: #222; padding: 0 0 6px 14px; }
.tab svg { width: 14px; height: 8px; margin-left: 19px; }
.explore { width: 210px; margin-left: auto; background: #fcfcfc; border-left: 2px solid #bbb; display: flex; align-items: center; padding-left: 23px; font: 24px/30px Roboto, sans-serif; color: #459b60; -webkit-text-stroke: .3px #459b60; }
.explore svg { width: 36px; height: 42px; margin-right: 28px; }

.dock { width: 2252px; height: 160px; margin-left: 314px; flex: none; border-radius: 12px 12px 0 0; padding: 0 8px; display: flex; background: radial-gradient(ellipse 110px 100px at 1434px 20px, #75916a 0, #75916a00 100%), radial-gradient(ellipse 180px 150px at 1480px 170px, #a0a396 10%, #a0a39600 100%), linear-gradient(90deg, #514f52, #504e51 20%, #4d5358 35%, #4f4d50 50%, #4c4c4d 75%, #504e51); }
.dock svg { width: 136px; height: 160px; }
.dock .run { background: radial-gradient(circle at 68px 152px, #000 3.600px, transparent 4.600px); }
.petals rect { mix-blend-mode: multiply; opacity: .95; }
.sep { width: 2px; height: 120px; margin: 20px 28px 0 30px; background: #222; }
```
